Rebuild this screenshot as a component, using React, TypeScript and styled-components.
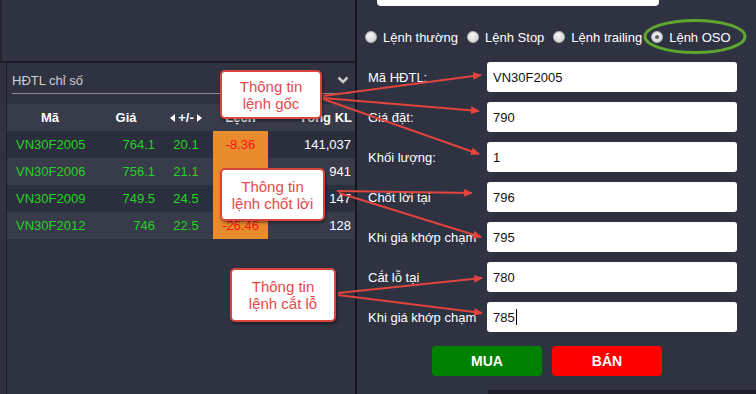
import styled, { createGlobalStyle } from "styled-components";

const GlobalStyle = createGlobalStyle`
  html, body {
    margin: 0;
    padding: 0;
    background: #2f3241;
  }
  body {
    font-family: "Liberation Sans", Arial, sans-serif;
  }
  * {
    box-sizing: border-box;
  }
`;

interface Quote {
  code: string;
  price: string;
  change: string;
  diff: string;
  volume: string;
}

// rows 2 and 3 of "Lệch" sit under the callout in the screenshot
const quotes: Quote[] = [
  { code: "VN30F2005", price: "764.1", change: "20.1", diff: "-8.36", volume: "141,037" },
  { code: "VN30F2006", price: "756.1", change: "21.1", diff: "", volume: "941" },
  { code: "VN30F2009", price: "749.5", change: "24.5", diff: "", volume: "147" },
  { code: "VN30F2012", price: "746", change: "22.5", diff: "-26.46", volume: "128" },
];

const orderTypes = ["Lệnh thường", "Lệnh Stop", "Lệnh trailing", "Lệnh OSO"];

const fields = [
  { label: "Mã HĐTL:", value: "VN30F2005" },
  { label: "Giá đặt:", value: "790" },
  { label: "Khối lượng:", value: "1" },
  { label: "Chốt lời tại", value: "796" },
  { label: "Khi giá khớp chạm", value: "795" },
  { label: "Cắt lỗ tại", value: "780" },
  { label: "Khi giá khớp chạm", value: "785", focused: true },
];

const arrows = [
  [323, 96, 483, 75],
  [323, 98, 481, 111],
  [323, 99, 481, 154],
  [337, 191, 474, 193],
  [339, 193, 483, 237],
  [338, 293, 484, 278],
  [338, 295, 484, 313],
];

const callouts = [
  { left: 220, top: 70, width: 102, height: 49, lines: ["Thông tin", "lệnh gốc"] },
  { left: 220, top: 168, width: 105, height: 53, lines: ["Thông tin", "lệnh chốt lời"] },
  { left: 230, top: 268, width: 106, height: 54, lines: ["Thông tin", "lệnh cắt lỗ"] },
];

export default function App() {
  return <Page>
    <GlobalStyle/>
    <Left>
      <TopPane/>
      <BottomPane>
        <TitleBar>
          <Title>HĐTL chỉ số</Title>
          <svg width="12" height="8" viewBox="0 0 12 8">
            <polyline points="1.5,1.5 6,6 10.5,1.5" fill="none" stroke="#c9c9c9" strokeWidth="2.6"/>
          </svg>
        </TitleBar>
        <Table>
          <HeadRow>
            <HeadCell>Mã</HeadCell>
            <HeadCell>Giá</HeadCell>
            <HeadCell>
              <svg width="5" height="8" viewBox="0 0 5 8"><polygon points="5,0 0,4 5,8" fill="#fff"/></svg>
              +/-
              <svg width="5" height="8" viewBox="0 0 5 8"><polygon points="0,0 5,4 0,8" fill="#fff"/></svg>
            </HeadCell>
            <HeadCell>Lệch</HeadCell>
            <HeadCell $align="right">Tổng KL</HeadCell>
          </HeadRow>
          {quotes.map((q, i) => <Row key={q.code} $even={i % 2 === 1}>
            <Cell $align="left" $color="#22d322">{q.code}</Cell>
            <Cell $align="right" $color="#22d322">{q.price}</Cell>
            <Cell $align="center" $color="#22d322">{q.change}</Cell>
            <DiffCell>{q.diff}</DiffCell>
            <Cell $align="right" $color="#ffffff">{q.volume}</Cell>
          </Row>)}
        </Table>
      </BottomPane>
    </Left>
    <Divider/>
    <Right>
      <TopBox/>
      <RadioRow>
        {orderTypes.map((t, i) => <RadioItem key={t}>
          <Radio $checked={i === 3}/>
          <span>{t}</span>
        </RadioItem>)}
      </RadioRow>
      <Form>
        {fields.map((f, i) => <FormRow key={i}>
          <Label>{f.label}</Label>
          <Field>
            {f.value}
            {f.focused && <Caret/>}
          </Field>
        </FormRow>)}
      </Form>
      <Buttons>
        <ActionButton $bg="#008000">MUA</ActionButton>
        <ActionButton $bg="#ff0000">BÁN</ActionButton>
      </Buttons>
      <BottomStrip/>
    </Right>

    <Annotations width="756" height="394" viewBox="0 0 756 394">
      <defs>
        <marker id="head" markerUnits="userSpaceOnUse" markerWidth="9" markerHeight="8" refX="8" refY="4" orient="auto">
          <path d="M0,0 L9,4 L0,8 z" fill="#e0443c"/>
        </marker>
      </defs>
      {arrows.map(([x1, y1, x2, y2], i) =>
        <line key={i} x1={x1} y1={y1} x2={x2 - 2} y2={y2} stroke="#e0443c" strokeWidth="2" markerEnd="url(#head)"/>
      )}
      <ellipse cx="695" cy="36.5" rx="50" ry="16" fill="none" stroke="#5ea72e" strokeWidth="3"/>
    </Annotations>

    {callouts.map((c, i) => <Callout key={i} style={{ left: c.left, top: c.top, width: c.width, height: c.height }}>
      {c.lines.map(l => <span key={l}>{l}</span>)}
    </Callout>)}
  </Page>
}

const Page = styled.div`
  position: relative;
  display: flex;
  width: 756px;
  height: 394px;
  overflow: hidden;
  background: #2f3241;
`;

const Left = styled.div`
  display: flex;
  flex-direction: column;
  width: 355px;
`;

const TopPane = styled.div`
  height: 63px;
  border-left: 2px solid #22242e;
  border-bottom: 2px solid #1b1d26;
`;

const BottomPane = styled.div`
  flex: 1;
  display: flex;
  flex-direction: column;
  margin-left: 6px;
  border-left: 1px solid #1b1d26;
`;

const TitleBar = styled.div`
  display: flex;
  align-items: center;
  justify-content: space-between;
  height: 31px;
  margin: 0 5px 0 5px;
  padding: 4px 1px 0 0;
  border-bottom: 1px solid #8a8a8a;
`;

const Title = styled.span`
  color: #cfcfcf;
  font-size: 13px;
`;

const Table = styled.div`
  display: flex;
  flex-direction: column;
  margin-top: 10px;
`;

const HeadRow = styled.div`
  display: grid;
  grid-template-columns: 86px 66px 54px 55px 87px;
  height: 27px;
  background: #383b49;
`;

const HeadCell = styled.div<{ $align?: string }>`
  display: flex;
  align-items: center;
  justify-content: ${p => p.$align === "right" ? "flex-end" : "center"};
  gap: 3px;
  padding-right: ${p => p.$align === "right" ? "3px" : "0"};
  color: #ffffff;
  font-size: 13px;
  font-weight: 700;
`;

const Row = styled.div<{ $even: boolean }>`
  display: grid;
  grid-template-columns: 86px 66px 54px 55px 87px;
  height: 27px;
  background: ${p => p.$even ? "#383b49" : "#2b2e3c"};
`;

const Cell = styled.div<{ $align: string; $color: string }>`
  display: flex;
  align-items: center;
  justify-content: ${p => p.$align === "left" ? "flex-start" : p.$align === "right" ? "flex-end" : "center"};
  padding: ${p => p.$align === "left" ? "0 0 0 9px" : p.$align === "right" ? "0 4px 0 0" : "0"};
  color: ${p => p.$color};
  font-size: 13px;
`;

const DiffCell = styled.div`
  display: flex;
  align-items: center;
  justify-content: center;
  background: #e88b2d;
  color: #ff1414;
  font-size: 13px;
`;

const Divider = styled.div`
  width: 2px;
  background: #14161e;
`;

const Right = styled.div`
  flex: 1;
  display: flex;
  flex-direction: column;
`;

const TopBox = styled.div`
  width: 282px;
  height: 6px;
  margin-left: 20px;
  background: #ffffff;
  border-radius: 0 0 4px 4px;
`;

const RadioRow = styled.div`
  display: flex;
  align-items: center;
  gap: 9px;
  height: 16px;
  margin-top: 23px;
  padding-left: 8px;
`;

const RadioItem = styled.label`
  display: flex;
  align-items: center;
  gap: 6px;
  color: #ffffff;
  font-size: 13px;
  white-space: nowrap;
`;

const Radio = styled.span<{ $checked: boolean }>`
  position: relative;
  width: 12px;
  height: 12px;
  border-radius: 50%;
  background: radial-gradient(circle at 40% 35%, #f4f4f4, #cfcfcf);
  border: 1px solid #b8b8b8;

  &::after {
    content: "";
    display: ${p => p.$checked ? "block" : "none"};
    position: absolute;
    left: 3px;
    top: 3px;
    width: 4px;
    height: 4px;
    border-radius: 50%;
    background: #5a5a5a;
  }
`;

const Form = styled.div`
  display: flex;
  flex-direction: column;
  gap: 10px;
  margin-top: 17px;
`;

const FormRow = styled.div`
  display: flex;
  align-items: center;
  height: 30px;
  padding-left: 11px;
`;

const Label = styled.span`
  width: 119px;
  color: #ffffff;
  font-size: 13px;
  white-space: nowrap;
`;

const Field = styled.div`
  display: flex;
  align-items: center;
  width: 250px;
  height: 30px;
  padding-left: 6px;
  background: #ffffff;
  border-radius: 3px;
  color: #111111;
  font-size: 13px;
`;

const Caret = styled.span`
  width: 1px;
  height: 16px;
  margin-left: 1px;
  background: #000000;
`;

const Buttons = styled.div`
  display: flex;
  gap: 10px;
  margin-top: 14px;
  padding-left: 75px;
`;

const ActionButton = styled.button<{ $bg: string }>`
  width: 110px;
  height: 30px;
  border: none;
  border-radius: 4px;
  background: ${p => p.$bg};
  color: #ffffff;
  font-family: "Liberation Sans", Arial, sans-serif;
  font-size: 14px;
  font-weight: 700;
`;

const BottomStrip = styled.div`
  height: 4px;
  margin-top: 14px;
  margin-left: 131px;
  background: #1c1e27;
`;

const Annotations = styled.svg`
  position: absolute;
  left: 0;
  top: 0;
  pointer-events: none;
`;

const Callout = styled.div`
  position: absolute;
  display: flex;
  flex-direction: column;
  align-items: center;
  justify-content: center;
  background: #ffffff;
  border: 2px solid #d8453f;
  border-radius: 5px;
  box-shadow: 1px 2px 3px rgba(0, 0, 0, 0.4);
  color: #e8484b;
  font-size: 15px;
  line-height: 17px;
`;
